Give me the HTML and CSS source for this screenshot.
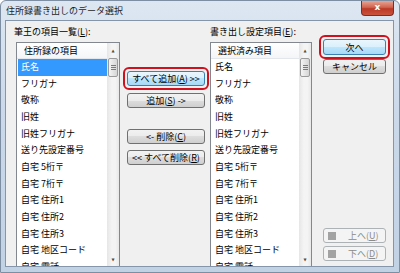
FILE: index.html
```html
<!DOCTYPE html>
<html lang="ja">
<head>
<meta charset="utf-8">
<link rel="stylesheet" href="styles.css">
</head>
<body>
<div class="window">
  <div class="titlebar">
    <span class="title">住所録書き出しのデータ選択</span>
    <div class="close">x</div>
  </div>
  <div class="client">
    <div class="col listcol">
      <div class="label">筆王の項目一覧(<u>L</u>):</div>
      <div class="list">
        <div class="list-body">
          <div class="header">住所録の項目</div>
          <div class="row selected">氏名</div>
          <div class="row">フリガナ</div>
          <div class="row">敬称</div>
          <div class="row">旧姓</div>
          <div class="row">旧姓フリガナ</div>
          <div class="row">送り先設定番号</div>
          <div class="row">自宅 5桁〒</div>
          <div class="row">自宅 7桁〒</div>
          <div class="row">自宅 住所1</div>
          <div class="row">自宅 住所2</div>
          <div class="row">自宅 住所3</div>
          <div class="row">自宅 地区コード</div>
          <div class="row">自宅 電話</div>
        </div>
        <div class="scrollbar">
          <div class="arrow">&#9650;</div>
          <div class="thumb"><span class="grip"></span></div>
          <div class="track"></div>
          <div class="arrow">&#9660;</div>
        </div>
      </div>
    </div>
    <div class="col mid">
      <button class="btn default hl btn-all">すべて追加(<u>A</u>) &gt;&gt;</button>
      <button class="btn btn-add">追加(<u>S</u>) -&gt;</button>
      <button class="btn btn-del">&lt;- 削除(<u>C</u>)</button>
      <button class="btn btn-delall">&lt;&lt; すべて削除(<u>R</u>)</button>
    </div>
    <div class="col listcol right">
      <div class="label">書き出し設定項目(<u>E</u>):</div>
      <div class="list">
        <div class="list-body">
          <div class="header">選択済み項目</div>
          <div class="row">氏名</div>
          <div class="row">フリガナ</div>
          <div class="row">敬称</div>
          <div class="row">旧姓</div>
          <div class="row">旧姓フリガナ</div>
          <div class="row">送り先設定番号</div>
          <div class="row">自宅 5桁〒</div>
          <div class="row">自宅 7桁〒</div>
          <div class="row">自宅 住所1</div>
          <div class="row">自宅 住所2</div>
          <div class="row">自宅 住所3</div>
          <div class="row">自宅 地区コード</div>
          <div class="row">自宅 電話</div>
        </div>
        <div class="scrollbar">
          <div class="arrow">&#9650;</div>
          <div class="thumb"><span class="grip"></span></div>
          <div class="track"></div>
          <div class="arrow">&#9660;</div>
        </div>
      </div>
    </div>
    <div class="col actions">
      <button class="btn default hl btn-next">次へ</button>
      <button class="btn btn-cancel">キャンセル</button>
      <button class="btn disabled btn-up"><span class="sq"></span>上へ(<u>U</u>)</button>
      <button class="btn disabled btn-down"><span class="sq"></span>下へ(<u>D</u>)</button>
    </div>
  </div>
</div>
</body>
</html>
```
FILE: styles.css
```css
html, body {
  margin: 0;
  padding: 0;
}
body {
  width: 400px;
  height: 273px;
  overflow: hidden;
  background: #ffffff;
  font-family: "Noto Sans CJK JP", "Noto Sans", sans-serif;
  font-size: 9px;
  color: #000;
}
.window {
  box-sizing: border-box;
  width: 400px;
  height: 273px;
  border: 1px solid #7d8ea3;
  border-radius: 6px 6px 0 0;
  background: linear-gradient(#dde7f2, #cbd9ea 40%, #c2d2e5);
  display: flex;
  flex-direction: column;
  padding: 0 5px 5px 4px;
}
.titlebar {
  height: 19px;
  display: flex;
  align-items: center;
  flex-shrink: 0;
}
.title {
  padding-left: 1px;
  font-size: 9px;
  color: #1e1e1e;
  line-height: 12px;
}
.close {
  margin-left: auto;
  align-self: flex-start;
  width: 33px;
  height: 15px;
  box-sizing: border-box;
  border: 1px solid #7a2e28;
  border-top: none;
  border-radius: 0 0 4px 4px;
  background: linear-gradient(#e9a595, #d0644f 45%, #bb3a28 55%, #c9533c);
  color: #fff;
  font-family: "DejaVu Sans", sans-serif;
  font-weight: bold;
  font-size: 9px;
  line-height: 13px;
  text-align: center;
}
.client {
  flex: 1;
  min-height: 0;
  background: #f0f0f0;
  border: 1px solid #8596ab;
  display: flex;
  padding: 5px 0 0 10px;
  overflow: hidden;
}
.col {
  display: flex;
  flex-direction: column;
  flex-shrink: 0;
}
.listcol {
  width: 104px;
}
.listcol.right {
  margin-left: 5px;
  width: 102px;
}
.label {
  height: 12px;
  line-height: 12px;
  margin: 0 0 4px -2px;
  white-space: nowrap;
}
.listcol.right .label {
  margin-left: 0;
}
.list {
  box-sizing: border-box;
  height: 226px;
  border: 1px solid #828790;
  background: #fff;
  display: flex;
  flex-shrink: 0;
}
.list-body {
  flex: 1;
  overflow: hidden;
}
.header {
  height: 15px;
  line-height: 15px;
  padding-left: 7px;
  background: linear-gradient(#ffffff, #f4f5f7);
  border-bottom: 1px solid #e3e6ea;
  white-space: nowrap;
}
.row {
  height: 16.67px;
  line-height: 16.67px;
  padding-left: 4px;
  white-space: nowrap;
}
.row.selected {
  background: #3399ff;
  color: #fff;
  margin-left: 1px;
  padding-left: 3px;
}
.scrollbar {
  width: 12px;
  display: flex;
  flex-direction: column;
  background: linear-gradient(90deg, #e6e6e6, #f4f4f4 40%, #f4f4f4 70%, #e8e8e8);
}
.arrow {
  height: 15px;
  line-height: 15px;
  text-align: center;
  font-family: "DejaVu Sans", sans-serif;
  font-size: 4px;
  color: #4d4d4d;
}
.thumb {
  box-sizing: border-box;
  height: 19px;
  margin: 0 1px;
  border: 1px solid #9a9a9a;
  border-radius: 2px;
  background: linear-gradient(90deg, #f5f5f5, #e4e4e4 50%, #d6d6d6);
  display: flex;
  align-items: center;
  justify-content: center;
}
.grip {
  width: 5px;
  height: 5px;
  background: repeating-linear-gradient(#7a7a7a 0 1px, transparent 1px 2px);
}
.track {
  flex: 1;
}
.mid {
  width: 78px;
  margin-left: 7px;
  padding-top: 45px;
}
.btn {
  box-sizing: border-box;
  height: 15px;
  margin: 0;
  padding: 0;
  border: 1px solid #707070;
  border-radius: 3px;
  background: linear-gradient(#f2f2f2, #ebebeb 50%, #dddddd 50%, #cfcfcf);
  font-family: inherit;
  font-size: 9px;
  line-height: 13px;
  color: #000;
  text-align: center;
  white-space: nowrap;
  display: flex;
  align-items: center;
  justify-content: center;
}
.btn.default {
  border-color: #3c7fb1;
  background: linear-gradient(#eaf6fd, #d9f0fc 50%, #bee6fd 50%, #a7d9f5);
}
.hl {
  position: relative;
}
.hl::after {
  content: "";
  position: absolute;
  inset: -5px -5px -5px -5px;
  border: 2px solid #cf111f;
  border-radius: 6px;
}
.btn-add {
  margin-top: 7px;
}
.btn-del {
  margin-top: 21px;
}
.btn-delall {
  margin-top: 6px;
}
.actions {
  width: 63px;
  margin-left: 11px;
  padding-top: 13px;
  padding-bottom: 5px;
}
.btn-next {
  height: 16px;
}
.btn-cancel {
  margin-top: 4px;
}
.btn-up {
  margin-top: auto;
}
.btn-down {
  margin-top: 3px;
}
.btn.disabled {
  border-color: #adb2b5;
  background: #f4f4f4;
  color: #8a8a8a;
  justify-content: flex-start;
  padding-left: 4px;
}
.sq {
  width: 8px;
  height: 8px;
  background: #a3a3a3;
  margin-right: 12px;
}
```
